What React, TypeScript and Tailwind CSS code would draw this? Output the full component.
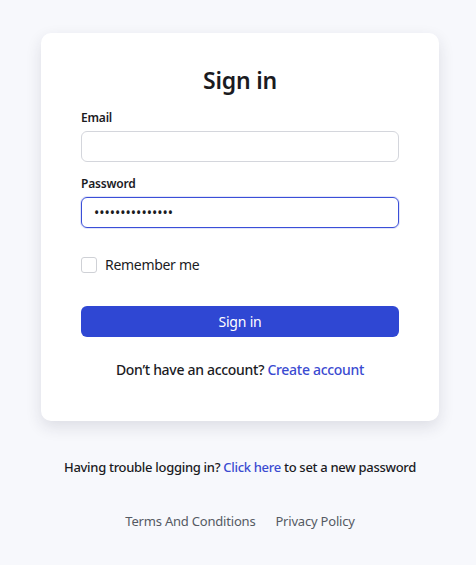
import { useState } from "react";

export default function App() {
  const [remember, setRemember] = useState(false);

  return (
    <div
      className="min-h-screen bg-[#f7f8fc] flex flex-col items-center pt-[33px] pl-1 text-[#1b1b1f]"
      style={{ fontFamily: '"Noto Sans", "Open Sans", sans-serif' }}
    >
      {/* Card */}
      <div className="w-[398px] bg-white rounded-[10px] shadow-[0_6px_16px_rgba(30,35,60,0.12)] px-10 pt-[31px] pb-[41px]">
        <h1 className="text-center text-[23px] font-semibold leading-8 mb-[14px] tracking-[-0.2px]">Sign in</h1>

        <label className="block text-[12px] font-semibold leading-4 mb-[5px] tracking-[-0.2px]">Email</label>
        <input
          type="email"
          className="w-full h-[31px] rounded-md border border-[#d4d6dc] px-3 text-sm outline-none"
        />

        <label className="block text-[12px] font-semibold leading-4 mt-[14px] mb-[5px] tracking-[-0.2px]">Password</label>
        <input
          type="password"
          defaultValue="secretpassword1"
          className="w-full h-[31px] rounded-md border border-[#3b4fd8] px-3 text-sm outline-none shadow-[0_0_0_1px_rgba(59,79,216,0.15)]"
        />

        <label className="flex items-center gap-2 mt-[27px] cursor-pointer">
          <input
            type="checkbox"
            checked={remember}
            onChange={(e) => setRemember(e.target.checked)}
            className="appearance-none w-4 h-4 rounded-[3px] border border-[#cfd1d6] bg-white"
          />
          <span className="text-[14px] leading-5 tracking-[-0.3px]">Remember me</span>
        </label>

        <button className="w-full h-[31px] mt-[31px] rounded-md bg-[#2f47d3] text-white text-[14px] tracking-[-0.2px]">
          Sign in
        </button>

        <p className="text-center text-[14px] font-medium mt-[23px] leading-5 tracking-[-0.3px]">
          Don’t have an account? <a className="text-[#3b4bd1]">Create account</a>
        </p>
      </div>

      <p className="text-[13px] font-medium mt-[36px] leading-5 tracking-[-0.3px]">
        Having trouble logging in? <a className="text-[#3b4bd1]">Click here</a> to set a new password
      </p>

      <div className="flex gap-5 mt-[34px] text-[13px] text-[#555a63] leading-5 tracking-[-0.2px]">
        <a>Terms And Conditions</a>
        <a>Privacy Policy</a>
      </div>
    </div>
  );
}
